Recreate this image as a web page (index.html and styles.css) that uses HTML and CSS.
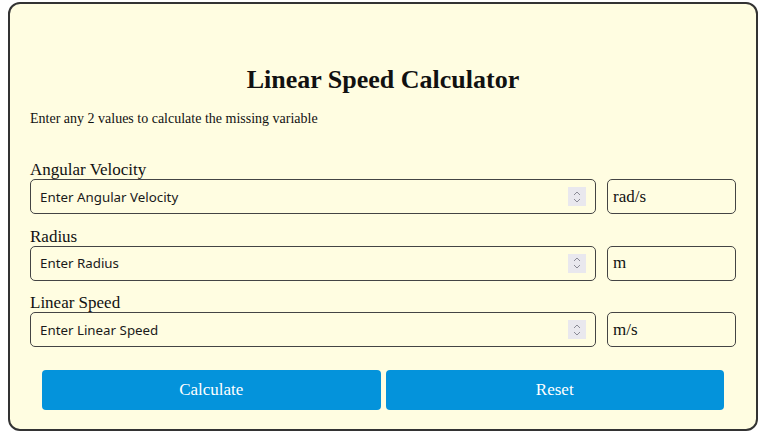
FILE: index.html
```html
<!DOCTYPE html>
<html>
<head>
<meta charset="utf-8">
<link rel="stylesheet" href="styles.css">
</head>
<body>
<div class="card">
  <h1 class="title">Linear Speed Calculator</h1>
  <p class="hint">Enter any 2 values to calculate the missing variable</p>
  <div class="field">
    <label class="label">Angular Velocity</label>
    <div class="row">
      <div class="inwrap">
        <input class="num" type="number" placeholder="Enter Angular Velocity">
        <span class="spin"><svg width="8" height="14" viewBox="0 0 8 14"><path d="M1 5 L4 2 L7 5 M1 9 L4 12 L7 9" fill="none" stroke="#8a8a95" stroke-width="1"/></svg></span>
      </div>
      <div class="unit">rad/s</div>
    </div>
  </div>
  <div class="field">
    <label class="label">Radius</label>
    <div class="row">
      <div class="inwrap">
        <input class="num" type="number" placeholder="Enter Radius">
        <span class="spin"><svg width="8" height="14" viewBox="0 0 8 14"><path d="M1 5 L4 2 L7 5 M1 9 L4 12 L7 9" fill="none" stroke="#8a8a95" stroke-width="1"/></svg></span>
      </div>
      <div class="unit">m</div>
    </div>
  </div>
  <div class="field">
    <label class="label">Linear Speed</label>
    <div class="row">
      <div class="inwrap">
        <input class="num" type="number" placeholder="Enter Linear Speed">
        <span class="spin"><svg width="8" height="14" viewBox="0 0 8 14"><path d="M1 5 L4 2 L7 5 M1 9 L4 12 L7 9" fill="none" stroke="#8a8a95" stroke-width="1"/></svg></span>
      </div>
      <div class="unit">m/s</div>
    </div>
  </div>
  <div class="buttons">
    <button class="btn">Calculate</button>
    <button class="btn">Reset</button>
  </div>
</div>
</body>
</html>
```
FILE: styles.css
```css
html, body {
  margin: 0;
  padding: 0;
  background: #ffffff;
}
body {
  padding: 2px 10px 0 8px;
  font-family: "Liberation Serif", "Times New Roman", serif;
  color: #111;
}
.card {
  width: 750px;
  box-sizing: border-box;
  border: 2px solid #333;
  border-radius: 12px;
  background: #fffde1;
  padding: 61px 20px 20px 20px;
  height: 429px;
}
.title {
  margin: 0;
  text-align: center;
  font-size: 26px;
  font-weight: bold;
  line-height: 30px;
}
.hint {
  margin: 15px 0 0 0;
  font-size: 14px;
  line-height: 18px;
}
.field {
  display: flex;
  flex-direction: column;
}
.hint + .field { margin-top: 32px; }
.field + .field { margin-top: 12.5px; }
.label {
  font-size: 17px;
  line-height: 19px;
}
.row {
  display: flex;
  gap: 11px;
}
.inwrap {
  flex: 1;
  position: relative;
  display: flex;
}
.num {
  flex: 1;
  height: 35px;
  box-sizing: border-box;
  border: 1px solid #444;
  border-radius: 5px;
  background: #fffde1;
  padding: 0 10px 0 9px;
  font-family: "Noto Sans", "Open Sans", "Liberation Sans", Arial, sans-serif;
  font-size: 13.33px;
  color: #111;
  -moz-appearance: textfield;
}
.num::-webkit-inner-spin-button,
.num::-webkit-outer-spin-button {
  -webkit-appearance: none;
  margin: 0;
}
.num::placeholder { color: #1a1a1a; }
.spin {
  position: absolute;
  right: 10px;
  top: 8px;
  width: 18px;
  height: 19px;
  background: #e9e8ee;
  display: flex;
  align-items: center;
  justify-content: center;
}
.unit {
  width: 129px;
  height: 35px;
  box-sizing: border-box;
  border: 1px solid #444;
  border-radius: 5px;
  padding: 0 5px;
  font-size: 17px;
  display: flex;
  align-items: center;
}
.buttons {
  display: flex;
  gap: 5px;
  margin: 23px 12px 0 12px;
}
.btn {
  flex: 1;
  height: 40px;
  border: none;
  border-radius: 4px;
  background: #0493db;
  color: #fff;
  font-family: "Liberation Serif", "Times New Roman", serif;
  font-size: 17px;
}
```
